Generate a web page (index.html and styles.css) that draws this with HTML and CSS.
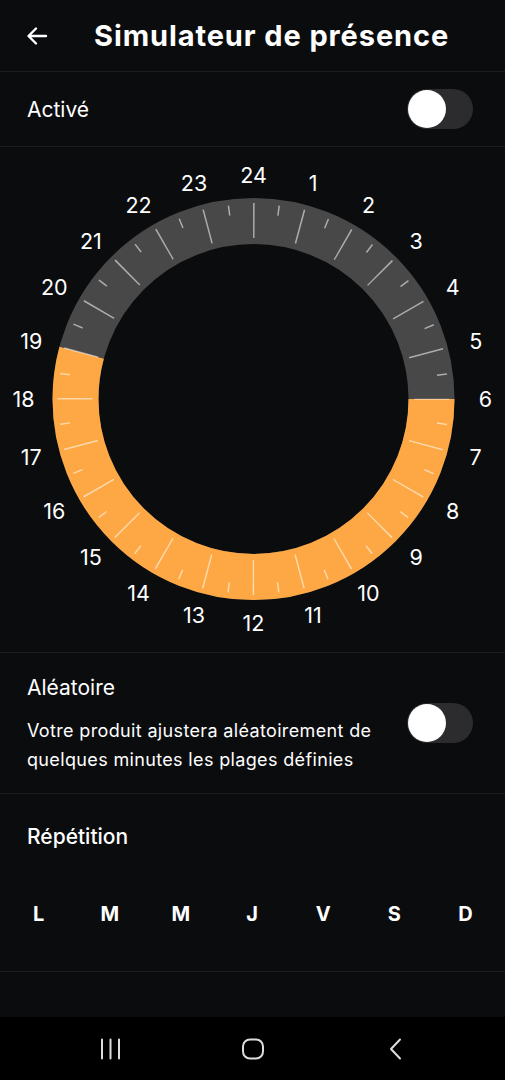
FILE: index.html
```html
<!DOCTYPE html>
<html lang="fr">
<head>
    <meta charset="UTF-8">
    <meta name="viewport" content="width=device-width, initial-scale=1.0">
    <title>Simulateur de présence</title>
    <link rel="stylesheet" href="styles.css">
</head>
<body>
    <div class="screen">
        <header class="top-bar">
            <svg class="back" width="24" height="24" viewBox="0 0 24 24">
                <path d="M21 12H4M11 4.5L3.5 12L11 19.5" fill="none" stroke="#fff" stroke-width="2.4" stroke-linecap="round" stroke-linejoin="round"/>
            </svg>
            <h1>Simulateur de présence</h1>
        </header>

        <div class="row active-row">
            <span class="label">Activé</span>
            <div class="switch"><div class="knob"></div></div>
        </div>

        <!-- 24h dial -->
        <div class="dial">
            <svg width="505" height="505" viewBox="0 0 505 505">
                <circle cx="253.5" cy="252" r="178" fill="none" stroke="#484848" stroke-width="46"/>
                <circle cx="253.5" cy="252" r="178" fill="none" stroke="#fda844" stroke-width="46"
                    stroke-dasharray="605.8 600"/>
                <circle cx="253.5" cy="252" r="178.5" fill="none" stroke="#fff" stroke-opacity="0.55" stroke-width="35"
                    stroke-dasharray="1.5 45.23" stroke-dashoffset="0.75"/>
                <circle cx="253.5" cy="252" r="190" fill="none" stroke="#fff" stroke-opacity="0.55" stroke-width="10"
                    stroke-dasharray="1.5 48.24" stroke-dashoffset="-24.12"/>
                <g class="hours" fill="#fff" text-anchor="middle" dominant-baseline="central">
                    <text x="253.5" y="28">24</text>
                    <text x="313" y="35.6">1</text>
                    <text x="368.5" y="58">2</text>
                    <text x="416.1" y="93.6">3</text>
                    <text x="452.7" y="140">4</text>
                    <text x="475.7" y="194">5</text>
                    <text x="485.5" y="252">6</text>
                    <text x="475.7" y="310">7</text>
                    <text x="452.7" y="364">8</text>
                    <text x="416.1" y="410.4">9</text>
                    <text x="368.5" y="446">10</text>
                    <text x="313" y="468.4">11</text>
                    <text x="253.5" y="476">12</text>
                    <text x="194" y="468.4">13</text>
                    <text x="138.5" y="446">14</text>
                    <text x="90.9" y="410.4">15</text>
                    <text x="54.3" y="364">16</text>
                    <text x="31.3" y="310">17</text>
                    <text x="23.5" y="252">18</text>
                    <text x="31.3" y="194">19</text>
                    <text x="54.3" y="140">20</text>
                    <text x="90.9" y="93.6">21</text>
                    <text x="138.5" y="58">22</text>
                    <text x="194" y="35.6">23</text>
                </g>
            </svg>
        </div>

        <div class="row random-row">
            <div class="random-text">
                <div class="label">Aléatoire</div>
                <p>Votre produit ajustera aléatoirement de quelques minutes les plages définies</p>
            </div>
            <div class="switch"><div class="knob"></div></div>
        </div>

        <div class="repeat">
            <div class="label repeat-title">Répétition</div>
            <div class="days">
                <span>L</span><span>M</span><span>M</span><span>J</span><span>V</span><span>S</span><span>D</span>
            </div>
        </div>

        <div class="filler"></div>

        <nav class="nav-bar">
            <svg width="22" height="22" viewBox="0 0 22 22">
                <path d="M2 1.5V20.5M10.5 1.5V20.5M19 1.5V20.5" stroke="#ddd" stroke-width="2" stroke-linecap="round"/>
            </svg>
            <svg width="24" height="24" viewBox="0 0 24 24">
                <rect x="2" y="2.5" width="20" height="19" rx="7" fill="none" stroke="#ddd" stroke-width="2"/>
            </svg>
            <svg width="22" height="22" viewBox="0 0 22 22">
                <path d="M16 1.5L7 11L16 20.5" fill="none" stroke="#ddd" stroke-width="2" stroke-linecap="round" stroke-linejoin="round"/>
            </svg>
        </nav>
    </div>
</body>
</html>
```
FILE: styles.css
```css
html, body {
    margin: 0;
    padding: 0;
    background: #0b0c0e;
}

body {
    font-family: Inter, "Noto Sans", sans-serif;
    color: #fff;
}

.screen {
    width: 505px;
    height: 1080px;
    display: flex;
    flex-direction: column;
}

.top-bar {
    display: flex;
    align-items: center;
    padding: 0 0 0 25px;
    border-bottom: 1px solid #1c1d20;
    box-sizing: border-box;
    height: 72px;
}

.top-bar h1 {
    margin: 0 0 0 45px;
    font-size: 29px;
    font-weight: 700;
    letter-spacing: 0.9px;
}

.back {
    display: block;
}

.row {
    display: flex;
    align-items: center;
    justify-content: space-between;
    padding: 0 32px 0 27px;
    border-bottom: 1px solid #1c1d20;
}

.active-row {
    height: 75px;
    box-sizing: border-box;
}

.label {
    font-size: 21px;
}

.switch {
    width: 66px;
    height: 40px;
    border-radius: 20px;
    background: #2c2c2f;
    flex-shrink: 0;
    display: flex;
    align-items: center;
    padding: 0 1px;
    box-sizing: border-box;
}

.knob {
    width: 38px;
    height: 38px;
    border-radius: 50%;
    background: #fff;
}

.dial {
    height: 506px;
    border-bottom: 1px solid #1c1d20;
    box-sizing: border-box;
}

.dial svg {
    display: block;
}

.hours {
    font-family: Inter, "Noto Sans", sans-serif;
    font-size: 21.5px;
}

.random-row {
    height: 141px;
    box-sizing: border-box;
    align-items: flex-start;
    padding-top: 22px;
}

.random-row .switch {
    margin-top: 28px;
}

.random-text p {
    margin: 16px 0 0;
    font-size: 18px;
    letter-spacing: 0.35px;
    line-height: 29px;
    width: 372px;
}

.repeat {
    height: 178px;
    box-sizing: border-box;
    border-bottom: 1px solid #1c1d20;
    padding: 30px 0 0;
}

.repeat-title {
    padding-left: 27px;
    font-weight: 500;
}

.days {
    display: grid;
    grid-template-columns: repeat(7, 1fr);
    padding: 53px 4px 0 3px;
}

.days span {
    text-align: center;
    font-size: 20px;
    font-weight: 700;
}

.filler {
    flex: 1;
}

.nav-bar {
    height: 63px;
    background: #000;
    display: flex;
    align-items: center;
    justify-content: center;
    gap: 119px;
}

.nav-bar svg {
    display: block;
}
```
